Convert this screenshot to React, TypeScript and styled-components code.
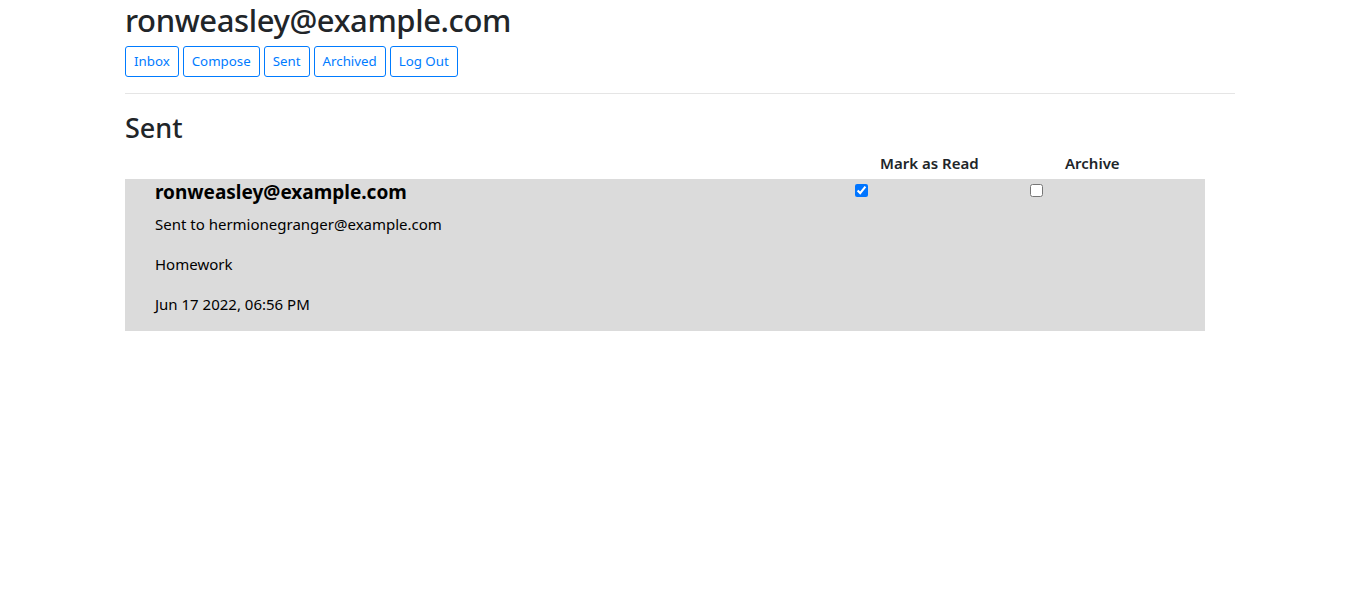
import React from 'react'
import styled, { createGlobalStyle } from 'styled-components'

const GlobalStyle = createGlobalStyle`
  body {
    margin: 0;
    font-family: "Noto Sans", "Open Sans", Arial, sans-serif;
    font-size: 16px;
    line-height: 1.5;
    color: #212529;
    background: #fff;
  }
  * { box-sizing: border-box; }
`

const Container = styled.div`
  width: 1140px;
  margin: 0 auto;
  padding: 0 15px;
`

const Title = styled.h2`
  margin: 0 0 8px;
  padding-top: 2px;
  height: 38px;
  font-size: 31px;
  font-weight: 500;
  line-height: 36px;
  letter-spacing: -0.4px;
`

const Nav = styled.div`
  display: flex;
  gap: 4px;
`

const NavButton = styled.button`
  font-family: inherit;
  font-size: 13.3px;
  line-height: 21px;
  padding: 4px 8px;
  color: #007bff;
  background: transparent;
  border: 1px solid #007bff;
  border-radius: 3px;
  cursor: pointer;
`

const Rule = styled.hr`
  margin: 16px 0;
  border: 0;
  border-top: 1px solid rgba(0, 0, 0, 0.1);
`

const Heading = styled.h3`
  margin: 0 0 8px;
  padding-top: 2px;
  height: 34px;
  font-size: 27px;
  font-weight: 500;
  line-height: 32px;
`

const HeaderRow = styled.div`
  display: grid;
  grid-template-columns: 755px 185px auto;
  width: 1080px;
  height: 27px;
  align-items: start;
  font-size: 15px;
  font-weight: 600;
  line-height: 22px;
`

const MailRow = styled.div<{ $read?: boolean }>`
  display: grid;
  grid-template-columns: 700px 175px auto;
  width: 1080px;
  padding-left: 30px;
  background: ${(p) => (p.$read ? '#dbdbdb' : '#fff')};
  color: #000;
`

const Sender = styled.h5`
  margin: 1px 0 8px;
  font-size: 19px;
  font-weight: 700;
  line-height: 24px;
`

const Line = styled.p`
  margin: 0 0 16px;
  font-size: 15px;
  line-height: 24px;

  &:last-child {
    margin-bottom: 15px;
  }
`

const Check = styled.input`
  margin: 4px 0 0;
  width: 13px;
  height: 13px;
`

const mails = [
  {
    sender: 'ronweasley@example.com',
    recipients: 'hermionegranger@example.com',
    subject: 'Homework',
    timestamp: 'Jun 17 2022, 06:56 PM',
    read: true,
    archived: false
  }
]

export default function App() {
  return (
    <Container>
      <GlobalStyle />
      <Title>ronweasley@example.com</Title>
      <Nav>
        <NavButton>Inbox</NavButton>
        <NavButton>Compose</NavButton>
        <NavButton>Sent</NavButton>
        <NavButton>Archived</NavButton>
        <NavButton>Log Out</NavButton>
      </Nav>
      <Rule />
      <Heading>Sent</Heading>
      <HeaderRow>
        <span />
        <span>Mark as Read</span>
        <span>Archive</span>
      </HeaderRow>
      {mails.map((m, i) => (
        <MailRow key={i} $read={m.read}>
          <div>
            <Sender>{m.sender}</Sender>
            <Line>Sent to {m.recipients}</Line>
            <Line>{m.subject}</Line>
            <Line>{m.timestamp}</Line>
          </div>
          <div>
            <Check type='checkbox' defaultChecked={m.read} />
          </div>
          <div>
            <Check type='checkbox' defaultChecked={m.archived} />
          </div>
        </MailRow>
      ))}
    </Container>
  )
}
